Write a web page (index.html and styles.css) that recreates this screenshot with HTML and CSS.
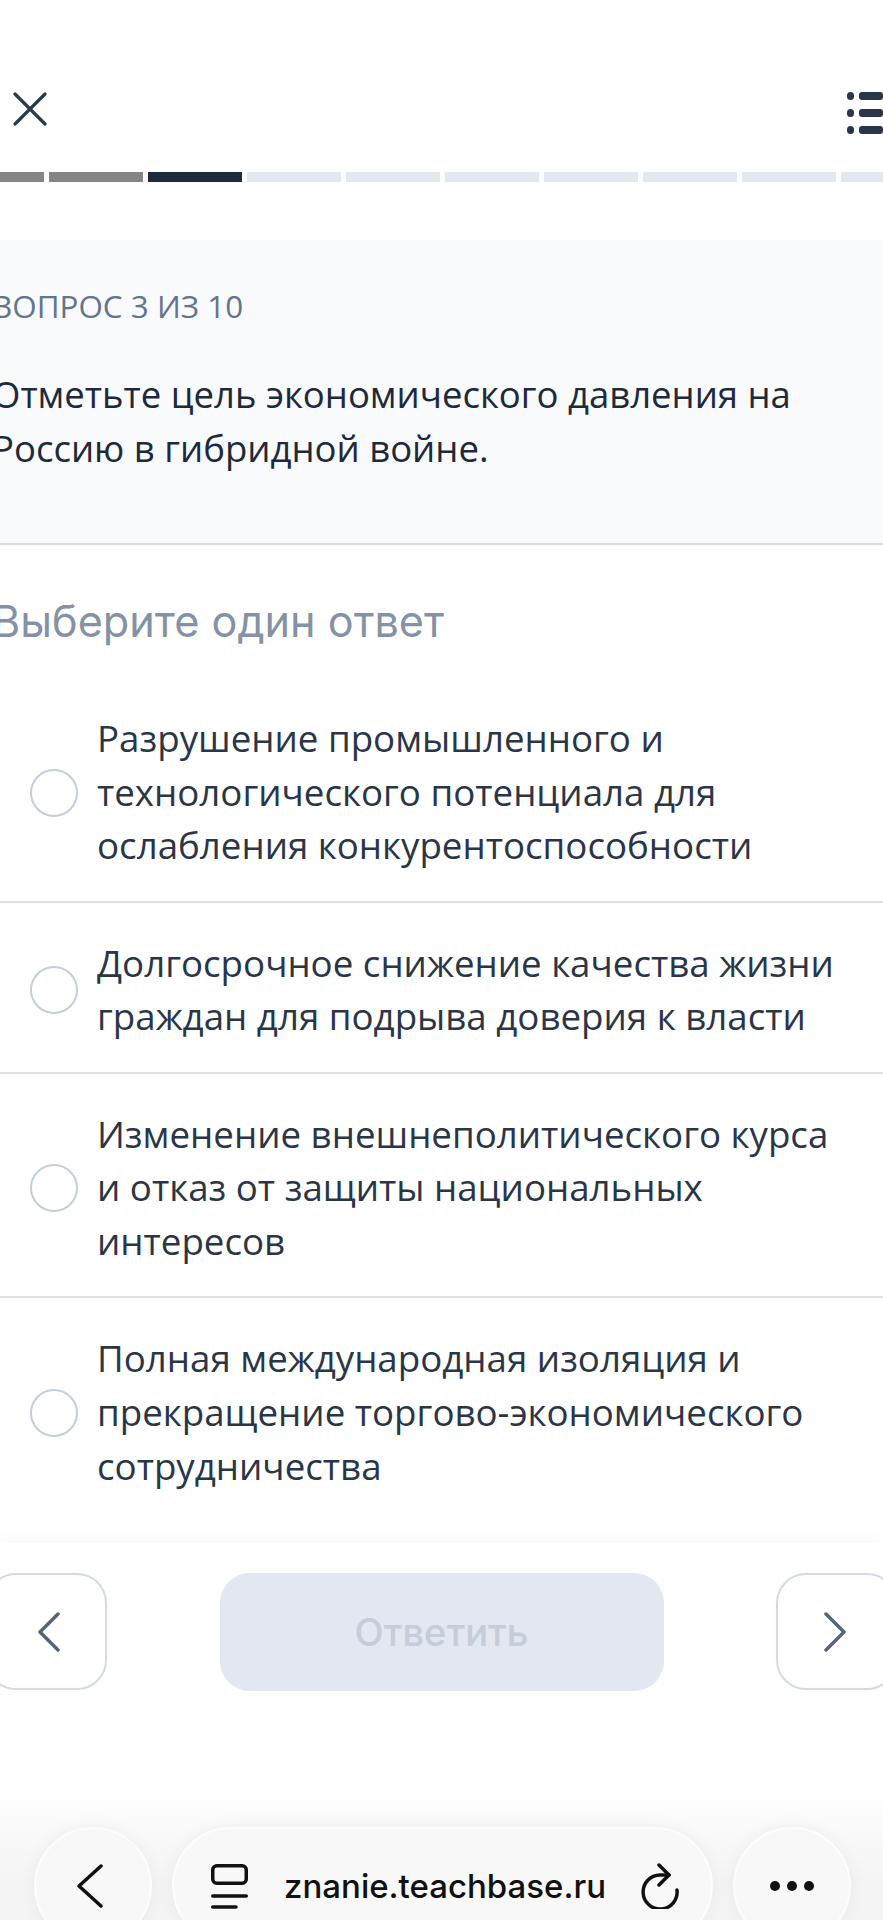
FILE: index.html
```html
<!DOCTYPE html>
<html lang="ru">

<head>
    <meta charset="UTF-8">
    <meta name="viewport" content="width=device-width, initial-scale=1.0">
    <title>Вопрос 3 из 10</title>
    <link rel="stylesheet" href="styles.css">
</head>

<body>
    <div class="page">
        <header class="top-bar">
            <svg class="icon-close" width="34" height="34" viewBox="0 0 34 34">
                <path d="M2 2 L32 32 M32 2 L2 32" />
            </svg>
            <svg class="icon-list" width="36" height="44" viewBox="0 0 36 44">
                <rect x="0" y="0" width="7" height="8" rx="3.5" />
                <rect x="12" y="0" width="24" height="8" rx="3" />
                <rect x="0" y="17" width="7" height="8" rx="3.5" />
                <rect x="12" y="17" width="24" height="8" rx="3" />
                <rect x="0" y="34" width="7" height="8" rx="3.5" />
                <rect x="12" y="34" width="24" height="8" rx="3" />
            </svg>
        </header>

        <div class="progress">
            <span class="step step-first step-done"></span>
            <span class="step step-done"></span>
            <span class="step step-current"></span>
            <span class="step"></span>
            <span class="step"></span>
            <span class="step"></span>
            <span class="step"></span>
            <span class="step"></span>
            <span class="step"></span>
            <span class="step"></span>
        </div>

        <section class="question">
            <div class="question-count">ВОПРОС 3 ИЗ 10</div>
            <p class="question-text">Отметьте цель экономического давления на Россию в гибридной войне.</p>
        </section>

        <h2 class="answer-title">Выберите один ответ</h2>

        <ul class="options">
            <li class="option">
                <span class="radio"></span>
                <span class="option-text">Разрушение промышленного и технологического потенциала для ослабления конкурентоспособности</span>
            </li>
            <li class="option">
                <span class="radio"></span>
                <span class="option-text">Долгосрочное снижение качества жизни граждан для подрыва доверия к власти</span>
            </li>
            <li class="option">
                <span class="radio"></span>
                <span class="option-text">Изменение внешнеполитического курса и отказ от защиты национальных интересов</span>
            </li>
            <li class="option">
                <span class="radio"></span>
                <span class="option-text">Полная международная изоляция и прекращение торгово-экономического сотрудничества</span>
            </li>
        </ul>

        <footer class="actions">
            <div class="nav-btn nav-prev">
                <svg width="22" height="40" viewBox="0 0 22 40">
                    <path d="M20 2 L2 20 L20 38" />
                </svg>
            </div>
            <div class="submit-btn">Ответить</div>
            <div class="nav-btn nav-next">
                <svg width="22" height="40" viewBox="0 0 22 40">
                    <path d="M2 2 L20 20 L2 38" />
                </svg>
            </div>
        </footer>

        <div class="browser-bar">
            <div class="browser-round round-back">
                <svg width="28" height="44" viewBox="0 0 28 44">
                    <path d="M25 2 L3 22 L25 42" />
                </svg>
            </div>
            <div class="address">
                <svg class="icon-reader" width="37" height="46" viewBox="0 0 37 46">
                    <rect x="1.75" y="2.75" width="33.5" height="17.5" rx="4" />
                    <path d="M1.75 33 H35.25 M1.75 44 H25" />
                </svg>
                <span class="address-text">znanie.teachbase.ru</span>
                <svg class="icon-reload" width="38" height="46" viewBox="0 0 38 46">
                    <path d="M28 12 H19 A17 17 0 1 0 36 27" />
                    <path d="M18 2 L28 12 L18 22" />
                </svg>
            </div>
            <div class="browser-round">
                <span class="dot"></span>
                <span class="dot"></span>
                <span class="dot"></span>
            </div>
        </div>
    </div>
</body>

</html>
```

FILE: styles.css
```css
* {
    box-sizing: border-box;
}

body {
    margin: 0;
    background-color: #fff;
    font-family: "Open Sans", sans-serif;
    overflow: hidden;
}

.page {
    width: 883px;
    height: 1920px;
    overflow: hidden;
    display: flex;
    flex-direction: column;
}

.top-bar {
    height: 172px;
    flex-shrink: 0;
    padding: 92px 0 0 13px;
    display: flex;
    justify-content: space-between;
    align-items: flex-start;
}

.icon-close {
    fill: none;
    stroke: #2d3a4a;
    stroke-width: 3.2;
    stroke-linecap: round;
}

.icon-list {
    fill: #27364a;
}

.progress {
    display: flex;
    gap: 5px;
    height: 10px;
    flex-shrink: 0;
}

.step {
    flex: 0 0 94px;
    background-color: #e2e7f0;
}

.step-first {
    flex-basis: 44px;
}

.step-done {
    background-color: #858585;
}

.step-current {
    background-color: #1e2b3e;
}

.question {
    margin-top: 58px;
    height: 305px;
    flex-shrink: 0;
    padding: 44px 0 0;
    background-color: #f8fafc;
    border-bottom: 2px solid #d5dce5;
}

.question-count {
    font-size: 31.4px;
    line-height: 44px;
    color: #64748b;
    margin-left: -8px;
}

.question-text {
    margin: 39px 0 0 -8px;
    width: 820px;
    font-size: 36.5px;
    line-height: 54px;
    color: #1e293b;
}

.answer-title {
    margin: 49px 0 0 -8px;
    font-family: Inter, sans-serif;
    font-size: 43.2px;
    line-height: 54px;
    font-weight: 400;
    color: #8592a6;
    flex-shrink: 0;
}

.options {
    list-style: none;
    margin: 64px 0 0;
    padding: 0;
    flex-shrink: 0;
    height: 831px;
}

.option {
    display: flex;
    align-items: center;
    padding: 34px 0 27.5px 30px;
    border-bottom: 2px solid #dde1e6;
}

.option:first-child {
    padding-top: 0;
}

.option:last-child {
    border-bottom: none;
}

.radio {
    flex: 0 0 48px;
    height: 48px;
    border-radius: 50%;
    border: 2px solid #c4cedb;
    background-color: #fff;
    margin-right: 19px;
}

.option-text {
    width: 748px;
    font-size: 36.7px;
    line-height: 53.7px;
    color: #2a3648;
}

.actions {
    flex-shrink: 0;
    height: 170px;
    padding-top: 30px;
    display: flex;
    justify-content: space-between;
    align-items: flex-start;
    background-color: #fff;
    box-shadow: 0 -6px 14px rgba(0, 0, 0, 0.025);
}

.nav-btn {
    width: 121px;
    height: 117px;
    border: 2px solid #d3dae3;
    border-radius: 30px;
    display: flex;
    align-items: center;
}

.nav-btn svg {
    fill: none;
    stroke: #55657a;
    stroke-width: 3.5;
    stroke-linecap: round;
    stroke-linejoin: round;
}

.nav-prev {
    margin-left: -14px;
    padding-left: 50px;
}

.nav-next {
    margin-right: -14px;
    padding-left: 46px;
}

.submit-btn {
    width: 444px;
    height: 118px;
    background-color: #e2e7f1;
    border-radius: 30px;
    font-family: Inter, sans-serif;
    font-size: 38px;
    font-weight: 500;
    line-height: 118px;
    text-align: center;
    color: #c4cdd9;
}

.browser-bar {
    flex: 1;
    padding: 114px 34px 0;
    display: flex;
    gap: 20px;
    background: linear-gradient(#fff 70px, #f4f4f4 170px);
}

.browser-round,
.address {
    height: 118px;
    flex-shrink: 0;
    border-radius: 59px;
    background-color: #f8f8f8;
    border: 2px solid #fdfdfd;
    box-shadow: 0 0 18px rgba(0, 0, 0, 0.05);
    display: flex;
    align-items: center;
}

.browser-round {
    width: 118px;
    justify-content: center;
    gap: 7px;
}

.browser-round svg {
    fill: none;
    stroke: #111;
    stroke-width: 3.5;
    stroke-linecap: round;
    stroke-linejoin: round;
}

.round-back svg {
    margin-right: 6px;
}

.dot {
    width: 10px;
    height: 10px;
    border-radius: 50%;
    background-color: #111;
}

.address {
    width: 541px;
    padding-left: 37px;
}

.icon-reader {
    fill: none;
    stroke: #111;
    stroke-width: 3.5;
    stroke-linecap: round;
    flex-shrink: 0;
}

.address-text {
    margin-left: 36px;
    font-family: Inter, sans-serif;
    font-size: 33px;
    font-weight: 500;
    color: #111;
    white-space: nowrap;
}

.icon-reload {
    margin-left: 35px;
    fill: none;
    stroke: #111;
    stroke-width: 3.5;
    stroke-linecap: round;
    stroke-linejoin: round;
    flex-shrink: 0;
}
```
